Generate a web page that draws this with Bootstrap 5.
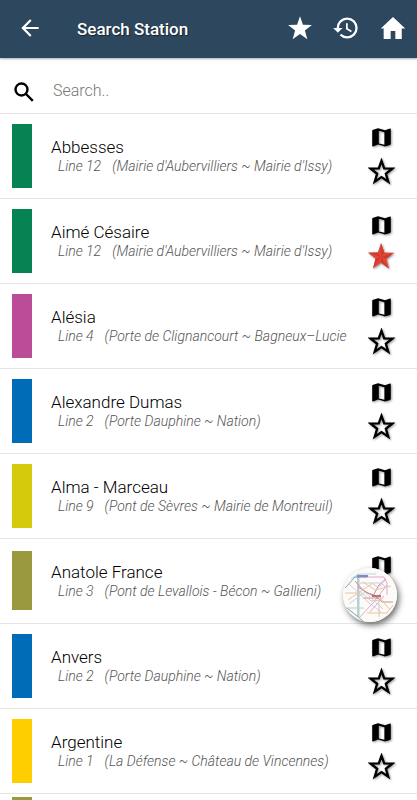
<!DOCTYPE html>
<html lang="en">
<head>
<meta charset="utf-8">
<meta name="viewport" content="width=device-width, initial-scale=1">
<title>Search Station</title>
<link href="https://cdn.jsdelivr.net/npm/bootstrap@5.3.0/dist/css/bootstrap.min.css" rel="stylesheet">
<style>
body { font-family: Roboto, sans-serif; background: #fff; }
.topbar { height: 58px; background: #2d475f; padding: 0 10px 2px 17px; box-shadow: 0 1px 2px rgba(45,71,95,.45); z-index: 1; }
.topbar h1 { font-size: 17px; line-height: 24px; font-weight: 500; margin: 0 0 0 34px; padding-top: 2px; text-shadow: 1px 1px 1px rgba(0,0,0,.5); }
.icon-btn { padding: 0; border: 0; background: none; line-height: 0; color: inherit; display: block; }
.tools { gap: 19px; }
.searchbar { height: 56px; padding: 11px 12px 0; border-bottom: 1px solid #e6e6e6; }
.searchbar label { padding-top: 2px; }
.searchbar input { font-size: 16px; font-weight: 300; padding: 0; margin-left: 17px; line-height: 24px; height: 24px; }
.searchbar input, .searchbar input:focus { border: 0; box-shadow: none; background: none; }
.searchbar input::placeholder { color: #777; opacity: 1; }
.stations { scrollbar-width: none; }
.stations::-webkit-scrollbar { display: none; }
.station { height: 85px; padding: 0 23px 0 12px; border-bottom: 1px solid #e6e6e6; }
.stripe { width: 20px; height: 64px; margin-top: 10px; margin-right: 19px; }
.stripe.short-bar { height: 59px; margin-top: 12px; }
.stripe.last-bar { margin-top: 3px; }
.info { margin-top: 23px; margin-right: 17px; min-width: 0; }
.info h2 { font-size: 17px; line-height: 20px; font-weight: 300; color: #000; margin: 0; }
.info p { font-size: 14px; line-height: 18px; font-weight: 300; font-style: italic; color: #555; margin: 0; padding-left: 7px; white-space: nowrap; overflow: hidden; }
.info p span { margin-right: 11px; }
.acts { margin-top: 14px; gap: 11px; color: #000; width: 26px; }
.acts svg { filter: drop-shadow(1px 1px 1px rgba(0,0,0,.4)); overflow: visible; }
.acts.saved { margin-top: 17px; gap: 8px; }
.l12 { background: #068352; } .l4 { background: #bb4d98; } .l2 { background: #006cb8; }
.l9 { background: #d5ca0b; } .l3 { background: #9a9940; } .l1 { background: #ffce00; }
.map-fab { position: fixed; right: 20px; bottom: 178px; width: 54px; height: 54px; border-radius: 50%; overflow: hidden; background: #fff; box-shadow: 2px 3px 6px rgba(0,0,0,.6); z-index: 2; }
</style>
<script src="https://cdn.jsdelivr.net/npm/bootstrap@5.3.0/dist/js/bootstrap.bundle.min.js"></script>
</head>
<body>
<svg class="d-none" aria-hidden="true">
  <symbol id="map" viewBox="0 0 19 19"><path fill="currentColor" fill-rule="evenodd" d="M.5 2 6 .3 13 2.200 18 .5q.8-.1.8.7V16l-.7.900L13 18.500 6 16.600 1 18.400q-.8.100-.8-.7V2.800zM6.800 2.800v12.700l5.600 1.300V4.200z"/></symbol>
  <symbol id="star-line" viewBox="0 0 24 24"><path fill="none" stroke="currentColor" stroke-width="2.100" d="M12 2.600 14.400 9.300 21.600 9.500 15.900 14 18 21 12 17 6 21 8.100 14 2.400 9.500 9.600 9.300z"/></symbol>
  <symbol id="star-red" viewBox="0 0 24 24"><path fill="#e64536" d="M12 0 15 8.700 24 9 17 14.500 19.400 23.500 12 18.300 4.600 23.500 7 14.500 0 9 9 8.700z"/><path fill="#cf3b30" d="M12 0v13l3-4.300zM24 9 12 13l5 1.500zM19.400 23.500 12 13v5.300zM4.600 23.500 12 13l-5 1.500zM0 9l12 4-3-4.300z"/></symbol>
</svg>
<div class="vh-100 d-flex flex-column overflow-hidden">
  <header class="topbar d-flex align-items-center text-white flex-shrink-0">
    <button class="icon-btn" type="button" aria-label="Back"><svg width="26" height="26" viewBox="0 0 24 24" fill="currentColor"><path d="M20 11H7.830l5.590-5.590L12 4l-8 8 8 8 1.410-1.410L7.830 13H20z"/></svg></button>
    <h1 class="flex-grow-1">Search Station</h1>
    <div class="tools d-flex align-items-center">
      <button class="icon-btn" type="button" aria-label="Favourites"><svg width="26" height="26" viewBox="0 0 24 24" fill="currentColor"><path d="M12 1.200 14.700 9 23 9.200 16.500 14.300 18.800 22.400 12 17.600 5.200 22.400 7.500 14.300 1 9.200 9.300 9z"/></svg></button>
      <button class="icon-btn" type="button" aria-label="History"><svg width="28" height="28" viewBox="0 0 24 24" fill="currentColor"><path d="M13 3a9 9 0 0 0-9 9H1l3.890 3.890.07.14L9 12H6c0-3.870 3.130-7 7-7s7 3.130 7 7-3.130 7-7 7c-1.930 0-3.680-.79-4.940-2.060l-1.420 1.420A8.950 8.950 0 0 0 13 21a9 9 0 0 0 0-18zm-1 5v5l4.280 2.540.72-1.210-3.500-2.080V8z"/></svg></button>
      <button class="icon-btn" type="button" aria-label="Home"><svg width="28" height="28" viewBox="0 0 24 24" fill="currentColor"><path d="M10 21.500v-7h4v7h5.500v-9H22.500L12 2.500 1.500 12.500H4v9z"/></svg></button>
    </div>
  </header>
  <div class="searchbar d-flex align-items-center flex-shrink-0">
    <label for="q" class="lh-1"><svg role="img" aria-label="Search" width="24" height="24" viewBox="0 0 24 24" fill="none" stroke="#000" stroke-width="2.400"><circle cx="9.500" cy="9.500" r="6"/><path d="m14 14 6.800 6.800"/></svg></label>
    <input id="q" type="text" class="form-control" placeholder="Search..">
  </div>
  <main class="flex-grow-1 overflow-auto stations">
    <ul class="list-unstyled mb-0">
      <li class="station d-flex"><div class="stripe l12 flex-shrink-0"></div><div class="info flex-grow-1"><h2>Abbesses</h2><p><span>Line 12</span>(Mairie d'Aubervilliers ~ Mairie d'Issy)</p></div><div class="acts d-flex flex-column align-items-center flex-shrink-0"><button class="icon-btn" type="button" aria-label="Show on map"><svg width="19" height="19"><use href="#map"/></svg></button><button class="icon-btn" type="button" aria-label="Add favourite"><svg width="27" height="27"><use href="#star-line"/></svg></button></div></li>
      <li class="station d-flex"><div class="stripe l12 flex-shrink-0"></div><div class="info flex-grow-1"><h2>Aimé Césaire</h2><p><span>Line 12</span>(Mairie d'Aubervilliers ~ Mairie d'Issy)</p></div><div class="acts saved d-flex flex-column align-items-center flex-shrink-0"><button class="icon-btn" type="button" aria-label="Show on map"><svg width="19" height="19"><use href="#map"/></svg></button><button class="icon-btn" type="button" aria-label="Remove favourite"><svg width="26" height="26"><use href="#star-red"/></svg></button></div></li>
      <li class="station d-flex"><div class="stripe l4 flex-shrink-0"></div><div class="info flex-grow-1"><h2>Alésia</h2><p><span>Line 4</span>(Porte de Clignancourt ~ Bagneux–Lucie</p></div><div class="acts d-flex flex-column align-items-center flex-shrink-0"><button class="icon-btn" type="button" aria-label="Show on map"><svg width="19" height="19"><use href="#map"/></svg></button><button class="icon-btn" type="button" aria-label="Add favourite"><svg width="27" height="27"><use href="#star-line"/></svg></button></div></li>
      <li class="station d-flex"><div class="stripe l2 flex-shrink-0"></div><div class="info flex-grow-1"><h2>Alexandre Dumas</h2><p><span>Line 2</span>(Porte Dauphine ~ Nation)</p></div><div class="acts d-flex flex-column align-items-center flex-shrink-0"><button class="icon-btn" type="button" aria-label="Show on map"><svg width="19" height="19"><use href="#map"/></svg></button><button class="icon-btn" type="button" aria-label="Add favourite"><svg width="27" height="27"><use href="#star-line"/></svg></button></div></li>
      <li class="station d-flex"><div class="stripe l9 flex-shrink-0"></div><div class="info flex-grow-1"><h2>Alma - Marceau</h2><p><span>Line 9</span>(Pont de Sèvres ~ Mairie de Montreuil)</p></div><div class="acts d-flex flex-column align-items-center flex-shrink-0"><button class="icon-btn" type="button" aria-label="Show on map"><svg width="19" height="19"><use href="#map"/></svg></button><button class="icon-btn" type="button" aria-label="Add favourite"><svg width="27" height="27"><use href="#star-line"/></svg></button></div></li>
      <li class="station d-flex"><div class="stripe short-bar l3 flex-shrink-0"></div><div class="info flex-grow-1"><h2>Anatole France</h2><p><span>Line 3</span>(Pont de Levallois - Bécon ~ Gallieni)</p></div><div class="acts saved d-flex flex-column align-items-center flex-shrink-0"><button class="icon-btn" type="button" aria-label="Show on map"><svg width="19" height="19"><use href="#map"/></svg></button></div></li>
      <li class="station d-flex"><div class="stripe l2 flex-shrink-0"></div><div class="info flex-grow-1"><h2>Anvers</h2><p><span>Line 2</span>(Porte Dauphine ~ Nation)</p></div><div class="acts d-flex flex-column align-items-center flex-shrink-0"><button class="icon-btn" type="button" aria-label="Show on map"><svg width="19" height="19"><use href="#map"/></svg></button><button class="icon-btn" type="button" aria-label="Add favourite"><svg width="27" height="27"><use href="#star-line"/></svg></button></div></li>
      <li class="station d-flex"><div class="stripe l1 flex-shrink-0"></div><div class="info flex-grow-1"><h2>Argentine</h2><p><span>Line 1</span>(La Défense ~ Château de Vincennes)</p></div><div class="acts d-flex flex-column align-items-center flex-shrink-0"><button class="icon-btn" type="button" aria-label="Show on map"><svg width="19" height="19"><use href="#map"/></svg></button><button class="icon-btn" type="button" aria-label="Add favourite"><svg width="27" height="27"><use href="#star-line"/></svg></button></div></li>
      <li class="station d-flex"><div class="stripe last-bar l3 flex-shrink-0"></div></li>
    </ul>
  </main>
</div>
<button class="icon-btn map-fab" type="button" aria-label="Open metro map">
  <svg width="54" height="54" viewBox="0 0 54 54" fill="none" stroke-width="1"><path fill="#fdfbf7" d="M0 0h54v54H0z"/>
  <path stroke="#e3a5d5" d="M13 9h28l3 6v12M27 44 41 28M16 50l14-15 14-18"/><path stroke="#6d5aa5" stroke-width="1.500" d="M14 8h11"/><path stroke="#7d9fb8" d="M15 6v43M2 20 12 9h12M4 40l10 8 6 5"/><path stroke="#a9d6c8" d="M16 10v40M3 40h18"/><path stroke="#c98a9c" d="m12 13 10 11 9 3 8 7h11M15 19l15 9 6-11 7-6M20 30h18"/><path stroke="#a8553f" stroke-width="1.500" d="M29 28h9"/><path stroke="#e6c49b" d="M2 25h17l9 8 11-1 8 10M20 14l12 8 16-4M24 45h20l6-8M36 49V35M5 32l10-7 15-10"/><path stroke="#d3c7e2" d="M17 15h22l4 5M5 15l21 20 12 9M30 16l5 3 5-3"/><path stroke="#b5d6ea" d="m8 11 7-5h18M6 36l16-12 18 17"/></svg>
</button>
</body>
</html>
